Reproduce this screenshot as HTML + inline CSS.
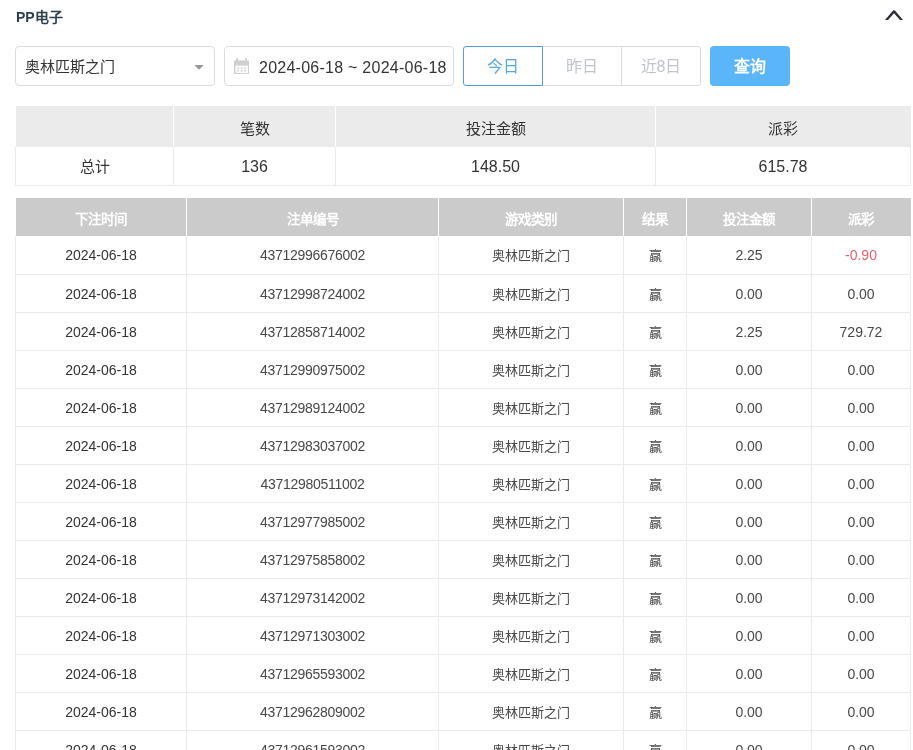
<!DOCTYPE html>
<html lang="zh-CN"><head><meta charset="utf-8">
<style>
*{margin:0;padding:0;box-sizing:border-box}
html,body{width:913px;height:750px;overflow:hidden;background:#fff}
body{font-family:"Liberation Sans",sans-serif;color:#333;position:relative}
.title{position:absolute;left:16px;top:7px;font-size:14px;font-weight:bold;color:#2c3e50;line-height:20px}
.sel{position:absolute;left:15px;top:46px;width:200px;height:40px;border:1px solid #dcdcdc;border-radius:4px}
.sel span{position:absolute;left:9px;top:1px;line-height:38px;font-size:15px;color:#333}
.sel i{position:absolute;left:179px;top:19px;width:0;height:0;border-left:5px solid transparent;border-right:5px solid transparent;border-top:5px solid #999}
.date{position:absolute;left:224px;top:46px;width:230px;height:40px;border:1px solid #dcdcdc;border-radius:4px}
.date span{position:absolute;left:34px;top:2px;line-height:38px;font-size:16px;letter-spacing:0.25px;color:#333}
.grp{position:absolute;left:463px;top:46px;height:40px;width:238px}
.grp div{position:absolute;top:0;height:40px;border:1px solid #dcdcdc;line-height:40px;text-align:center;font-size:16px;color:#c0c4cc}
.b1{left:0;width:80px;border-color:#4f9fdc !important;color:#56a8e2 !important;border-radius:3px 0 0 3px;z-index:2}
.b2{left:79px;width:80px}
.b3{left:158px;width:80px;border-radius:0 3px 3px 0}
.q{position:absolute;left:710px;top:46px;width:80px;height:40px;border-radius:4px;background:#5ab6f8;color:#fff;font-size:16px;font-weight:bold;line-height:41px;text-align:center}
table{border-collapse:collapse;position:absolute;left:15px;table-layout:fixed}
.sum{top:106px;width:895px}
.sum th{background:#ebebeb;height:41px;padding-top:2px;font-weight:normal;font-size:15px;color:#333;border-left:1px solid #fff}
.sum td{height:38px;padding-top:2px;font-size:16px;text-align:center;border:1px solid #ebebeb;border-top:none}
.sum td:first-child{font-size:15px;padding-top:0}
.det{top:198px;width:895px}
.det th{background:#cbcbcb;height:38px;font-size:13.5px;color:#fff;font-weight:bold;border-left:1px solid #fff;padding-top:1px}
.det th:first-child,.sum th:first-child{border-left:none}
.det td{height:38px;font-size:14px;text-align:center;border:1px solid #ebebeb;border-top:none;color:#484848;padding-top:1px}
.det td.d{color:#333}
.det td.n{letter-spacing:-0.3px}
.det td.g{font-size:13px;padding-top:0}
.det td.red{color:#e9606c}
</style></head><body><div style="position:absolute;left:0;top:0;width:913px;height:750px;will-change:transform">
<div class="title">PP电子</div>
<svg style="position:absolute;left:880px;top:5px" width="28" height="20" viewBox="880 5 28 20"><path d="M885 20 L893.1 10.6 Q894 9.7 894.9 10.6 L903 20 L900 20 L894 13.2 L888 20 Z" fill="#2b2f36"/></svg>
<div class="sel"><span>奥林匹斯之门</span></div><svg style="position:absolute;left:190px;top:60px" width="18" height="14" viewBox="190 60 18 14"><path d="M194.3 65 L203.7 65 L199 69.8 Z" fill="#999"/></svg>
<svg style="position:absolute;left:230px;top:55px" width="24" height="22" viewBox="230 55 24 22"><rect x="234" y="60.5" width="15" height="13.5" rx="0.8" fill="#d0d0d0"/><rect x="235.5" y="65.6" width="12.4" height="7.3" fill="#fff"/><g fill="#d0d0d0"><rect x="237.2" y="67.2" width="1.6" height="1.6"/><rect x="240.8" y="67.2" width="1.6" height="1.6"/><rect x="244.2" y="67.2" width="1.6" height="1.6"/><rect x="237.2" y="70.1" width="1.6" height="1.6"/><rect x="240.8" y="70.1" width="1.6" height="1.6"/><rect x="244.2" y="70.1" width="1.6" height="1.6"/><rect x="236.2" y="58" width="2" height="4.5" rx="1"/><rect x="245" y="58" width="2" height="4.5" rx="1"/></g></svg><div class="date"><span>2024-06-18 ~ 2024-06-18</span></div>
<div class="grp"><div class="b1">今日</div><div class="b2">昨日</div><div class="b3">近8日</div></div>
<div class="q">查询</div>
<table class="sum">
<colgroup><col style="width:158px"><col style="width:162px"><col style="width:320px"><col style="width:255px"></colgroup>
<tr><th></th><th>笔数</th><th>投注金额</th><th>派彩</th></tr>
<tr><td>总计</td><td>136</td><td>148.50</td><td>615.78</td></tr>
</table>
<table class="det">
<colgroup><col style="width:171px"><col style="width:252px"><col style="width:185px"><col style="width:63px"><col style="width:125px"><col style="width:99px"></colgroup>
<tr><th>下注时间</th><th>注单编号</th><th>游戏类别</th><th>结果</th><th>投注金额</th><th>派彩</th></tr>
<tr><td class="d">2024-06-18</td><td class="n">43712996676002</td><td class="g">奥林匹斯之门</td><td class="g">赢</td><td>2.25</td><td class="red">-0.90</td></tr>
<tr><td class="d">2024-06-18</td><td class="n">43712998724002</td><td class="g">奥林匹斯之门</td><td class="g">赢</td><td>0.00</td><td>0.00</td></tr>
<tr><td class="d">2024-06-18</td><td class="n">43712858714002</td><td class="g">奥林匹斯之门</td><td class="g">赢</td><td>2.25</td><td>729.72</td></tr>
<tr><td class="d">2024-06-18</td><td class="n">43712990975002</td><td class="g">奥林匹斯之门</td><td class="g">赢</td><td>0.00</td><td>0.00</td></tr>
<tr><td class="d">2024-06-18</td><td class="n">43712989124002</td><td class="g">奥林匹斯之门</td><td class="g">赢</td><td>0.00</td><td>0.00</td></tr>
<tr><td class="d">2024-06-18</td><td class="n">43712983037002</td><td class="g">奥林匹斯之门</td><td class="g">赢</td><td>0.00</td><td>0.00</td></tr>
<tr><td class="d">2024-06-18</td><td class="n">43712980511002</td><td class="g">奥林匹斯之门</td><td class="g">赢</td><td>0.00</td><td>0.00</td></tr>
<tr><td class="d">2024-06-18</td><td class="n">43712977985002</td><td class="g">奥林匹斯之门</td><td class="g">赢</td><td>0.00</td><td>0.00</td></tr>
<tr><td class="d">2024-06-18</td><td class="n">43712975858002</td><td class="g">奥林匹斯之门</td><td class="g">赢</td><td>0.00</td><td>0.00</td></tr>
<tr><td class="d">2024-06-18</td><td class="n">43712973142002</td><td class="g">奥林匹斯之门</td><td class="g">赢</td><td>0.00</td><td>0.00</td></tr>
<tr><td class="d">2024-06-18</td><td class="n">43712971303002</td><td class="g">奥林匹斯之门</td><td class="g">赢</td><td>0.00</td><td>0.00</td></tr>
<tr><td class="d">2024-06-18</td><td class="n">43712965593002</td><td class="g">奥林匹斯之门</td><td class="g">赢</td><td>0.00</td><td>0.00</td></tr>
<tr><td class="d">2024-06-18</td><td class="n">43712962809002</td><td class="g">奥林匹斯之门</td><td class="g">赢</td><td>0.00</td><td>0.00</td></tr>
<tr><td class="d">2024-06-18</td><td class="n">43712961593002</td><td class="g">奥林匹斯之门</td><td class="g">赢</td><td>0.00</td><td>0.00</td></tr>
</table>
</div></body></html>
